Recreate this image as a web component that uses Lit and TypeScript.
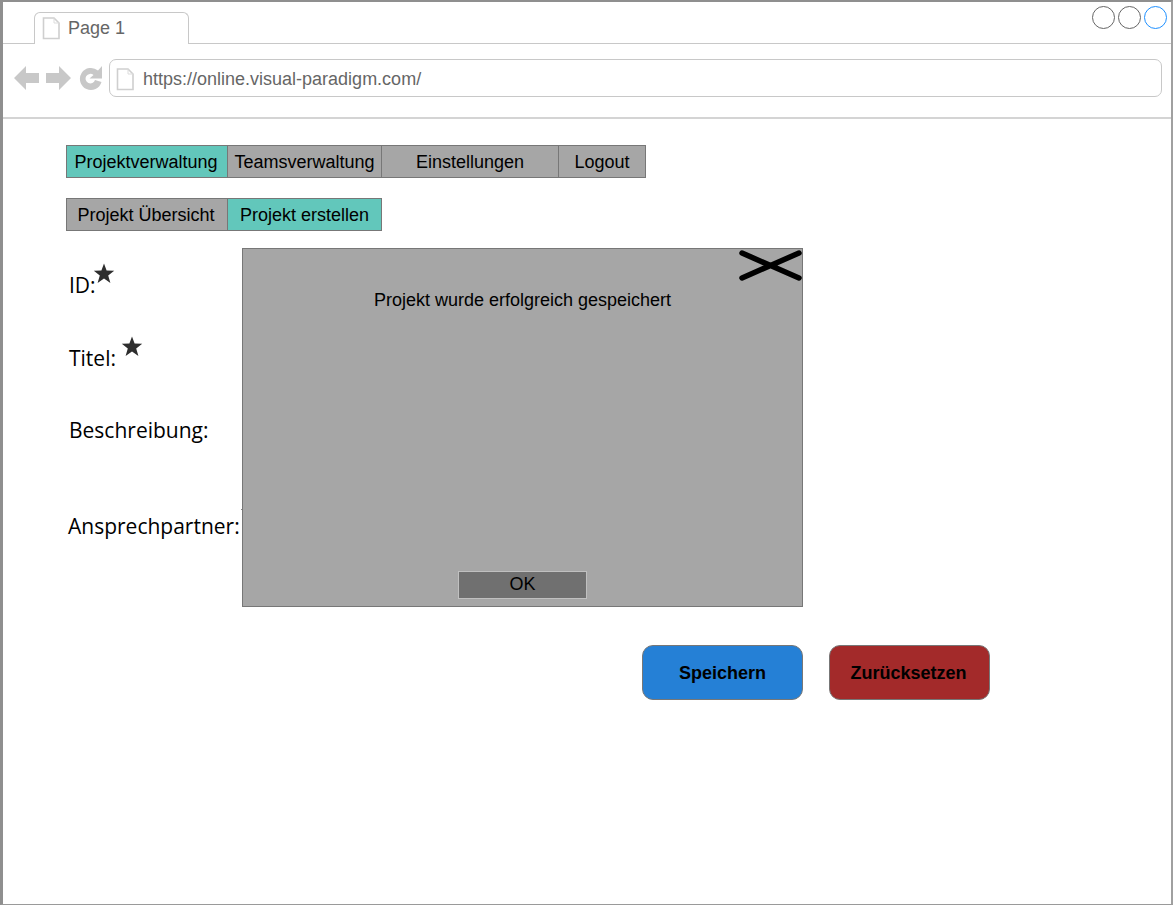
import { LitElement, html, css, svg } from "lit";
import { customElement } from "lit/decorators.js";

const pageIcon = svg`<path d="M1.5 1 H12 L17 6 V21.5 H1.5 Z" fill="#fff" stroke="#cfcfcf" stroke-width="1.6"/><path d="M12 1 V6 H17" fill="none" stroke="#dcdcdc" stroke-width="1"/>`;

@customElement("app-root")
export class AppRoot extends LitElement {
    static styles = css`
        :host {
            display: block;
            position: relative;
            box-sizing: border-box;
            width: 1173px;
            height: 905px;
            background: #fff;
            border-top: 2px solid #8f8f8f;
            border-left: 3px solid #8f8f8f;
            border-right: 2px solid #a0a0a0;
            border-bottom: 1px solid #9a9a9a;
            font-family: "Liberation Sans", Arial, sans-serif;
            color: #000;
            overflow: hidden;
        }

        .tabstrip {
            display: flex;
            justify-content: space-between;
            height: 42px;
            box-sizing: border-box;
            padding: 10px 4px 0 31px;
            border-bottom: 1px solid #c8c8c8;
        }

        .tab {
            display: flex;
            align-items: center;
            gap: 7px;
            box-sizing: border-box;
            width: 155px;
            height: 32px;
            padding: 0 0 0 7px;
            background: #fff;
            border: 1px solid #c8c8c8;
            border-bottom: none;
            border-radius: 6px 6px 0 0;
            color: #666;
            font-size: 18px;
        }

        .page-icon {
            width: 19px;
            height: 23px;
            flex: none;
        }

        .dots {
            display: flex;
            gap: 3px;
            margin: -6px 0 0 0;
            height: 23px;
        }

        .dot {
            box-sizing: border-box;
            width: 23px;
            height: 23px;
            border: 1.5px solid #666;
            border-radius: 50%;
        }

        .dot.active {
            border-color: #1e90ff;
        }

        .addressbar {
            display: flex;
            align-items: center;
            height: 75px;
            box-sizing: border-box;
            padding: 0 9px 5px 11px;
            border-bottom: 2px solid #d4d4d4;
        }

        .nav-icons {
            width: 90px;
            height: 26px;
            flex: none;
            margin-right: 5px;
        }

        .url {
            flex: 1;
            display: flex;
            align-items: center;
            gap: 8px;
            height: 38px;
            box-sizing: border-box;
            padding: 2px 0 0 6px;
            border: 1px solid #c8c8c8;
            border-radius: 7px;
            color: #666;
            font-size: 18px;
        }

        main {
            padding: 26px 0 0 63px;
        }

        .tabs {
            display: flex;
            height: 33px;
            margin-bottom: 20px;
        }

        .cell {
            display: flex;
            align-items: center;
            justify-content: center;
            box-sizing: border-box;
            height: 33px;
            margin-left: -1px;
            padding-top: 2px;
            background: #a6a6a6;
            border: 1px solid #777;
            font-size: 18px;
            white-space: nowrap;
        }

        .cell:first-child {
            margin-left: 0;
            padding-right: 2px;
        }

        .cell.on {
            background: #62c7bb;
        }

        .form {
            display: flex;
            flex-direction: column;
            font-family: "Open Sans", sans-serif;
            font-size: 21px;
            line-height: 27px;
        }

        .row {
            display: flex;
            align-items: flex-start;
            height: 27px;
            padding-left: 3px;
        }

        .star {
            width: 22px;
            height: 21px;
            flex: none;
        }

        .actions {
            display: flex;
            gap: 26px;
            margin: 0 0 0 576px;
        }

        .action {
            display: flex;
            align-items: center;
            justify-content: center;
            box-sizing: border-box;
            width: 161px;
            height: 55px;
            padding-top: 2px;
            border: 1px solid #777;
            border-radius: 11px;
            font-size: 18px;
            font-weight: 700;
        }

        .save {
            background: #2580d6;
        }

        .reset {
            padding-right: 2px;
            background: #a32a2a;
        }

        .modal {
            position: absolute;
            left: 239px;
            top: 246px;
            display: flex;
            flex-direction: column;
            align-items: center;
            box-sizing: border-box;
            width: 561px;
            height: 359px;
            background: #a6a6a6;
            border: 1px solid #777;
            font-size: 18px;
        }

        .modal::before {
            content: "";
            position: absolute;
            left: -2px;
            top: 260px;
            width: 1px;
            height: 1px;
            background: #888;
        }

        .close {
            position: absolute;
            right: 0;
            top: 0;
            width: 63px;
            height: 33px;
        }

        .message {
            margin-top: 41px;
            flex: 1;
        }

        .ok {
            display: flex;
            align-items: center;
            justify-content: center;
            box-sizing: border-box;
            width: 129px;
            height: 28px;
            margin-bottom: 7px;
            padding-bottom: 2px;
            background: #707070;
            border: 1px solid #c0c0c0;
        }
    `;

    renderStar(mt: number, ml: number) {
        return html`<svg class="star" style="margin: ${mt}px 0 0 ${ml}px" viewBox="0 0 22 21">
            <path d="M11 0.5 L13.6 7.6 L21.2 7.8 L15.2 12.5 L17.4 20 L11 15.6 L4.6 20 L6.8 12.5 L0.8 7.8 L8.4 7.6 Z" fill="#2e2e2e" />
        </svg>`;
    }

    render() {
        return html`
            <div class="tabstrip">
                <div class="tab">
                    <svg class="page-icon" viewBox="0 0 19 23">${pageIcon}</svg>
                    Page 1
                </div>
                <div class="dots">
                    <span class="dot"></span>
                    <span class="dot"></span>
                    <span class="dot active"></span>
                </div>
            </div>
            <div class="addressbar">
                <svg class="nav-icons" viewBox="0 0 90 26">
                    <path d="M0 13 L12 1 V8 H25 V18 H12 V25 Z" fill="#c8c8c8" />
                    <path d="M57 13 L45 1 V8 H32 V18 H45 V25 Z" fill="#c8c8c8" />
                    <path d="M84 5.5 A11 11 0 1 0 87.5 17 L81 15 A4.8 4.8 0 1 1 79.5 10 L75.5 13.5 H88 V1 Z" fill="#c8c8c8" />
                </svg>
                <div class="url">
                    <svg class="page-icon" viewBox="0 0 19 23">${pageIcon}</svg>
                    https://online.visual-paradigm.com/
                </div>
            </div>
            <main>
                <div class="tabs">
                    <div class="cell on" style="width: 162px">Projektverwaltung</div>
                    <div class="cell" style="width: 155px">Teamsverwaltung</div>
                    <div class="cell" style="width: 178px">Einstellungen</div>
                    <div class="cell" style="width: 88px">Logout</div>
                </div>
                <div class="tabs">
                    <div class="cell" style="width: 162px">Projekt Übersicht</div>
                    <div class="cell on" style="width: 155px">Projekt erstellen</div>
                </div>
                <div class="form">
                    <div class="row" style="margin-top: 21px">ID:${this.renderStar(-9, -3)}</div>
                    <div class="row" style="margin-top: 46px">Titel:${this.renderStar(-9, 5)}</div>
                    <div class="row" style="margin-top: 45px">Beschreibung:</div>
                    <div class="row" style="margin-top: 69px; padding-left: 2px">Ansprechpartner:</div>
                </div>
                <div class="actions" style="margin-top: 105px">
                    <div class="action save">Speichern</div>
                    <div class="action reset">Zurücksetzen</div>
                </div>
            </main>
            <div class="modal">
                <svg class="close" viewBox="0 0 63 33">
                    <path d="M3 4 L60 29 M60 4 L3 29" stroke="#000" stroke-width="5.5" stroke-linecap="round" />
                </svg>
                <div class="message">Projekt wurde erfolgreich gespeichert</div>
                <div class="ok">OK</div>
            </div>
        `;
    }
}
